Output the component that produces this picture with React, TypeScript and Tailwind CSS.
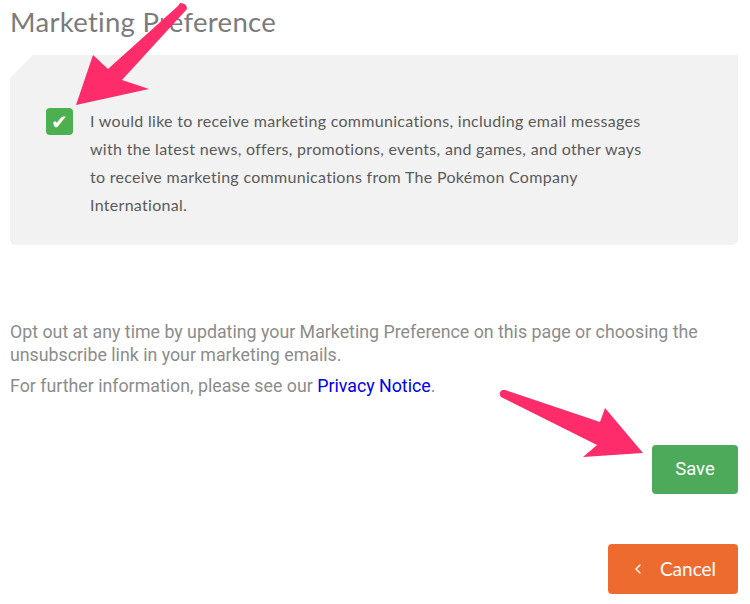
import { ChevronLeft } from "lucide-react"

function Arrows() {
  return (
    <svg
      className="pointer-events-none absolute inset-0"
      width={750}
      height={604}
      viewBox="0 0 750 604"
    >
      {/* arrow pointing at the checkbox */}
      <path
        d="M180 3 Q187 3 187 9 L122 80 L149 89 L76 105 L93 55 L108 69 L178 6 Z"
        fill="#fe2c6b"
      />
      {/* arrow pointing at save */}
      <path
        d="M502 390 Q498 393 501 397 L597 445 L583 457 L643 453 L605 408 L600 422 L505 390 Z"
        fill="#fe2c6b"
      />
    </svg>
  )
}

export default function App() {
  return (
    <div className="relative w-[750px] h-[604px] overflow-hidden bg-white pl-[10px] pr-[12px]">
      <h1 className="text-[27.5px] leading-[44px] text-[#7b7b7b] font-['Lato',sans-serif] tracking-[0.3px]">
        Marketing Preference
      </h1>

      <div className="mt-[11px] h-[190px] bg-[#f2f2f2] rounded-b-md [clip-path:polygon(23px_0,100%_0,100%_100%,0_100%,0_23px)] pl-[36px] pt-[53px] flex gap-[17px]">
        <div className="w-[27px] h-[27px] shrink-0 rounded-[4px] bg-[#4caf50] flex items-center justify-center text-white text-[20px] leading-none font-['DejaVu_Sans',sans-serif]">
          ✔
        </div>
        <p className="w-[558px] -mt-[1px] text-[16px] leading-[28px] text-[#5a5a5a] font-['Lato',sans-serif] tracking-[0.3px]">
          I would like to receive marketing communications, including email messages with the latest news, offers, promotions, events, and games, and other ways to receive marketing communications from The Pokémon Company International.
        </p>
      </div>

      <div className="mt-[75px] font-['Roboto',sans-serif] text-[17.8px] leading-[23px] text-[#8c8c8c]">
        <p>
          Opt out at any time by updating your Marketing Preference on this page or choosing the unsubscribe link in your marketing emails.
        </p>
        <p className="mt-[8px]">
          For further information, please see our{" "}
          <a href="#" className="text-[#0000ee]">
            Privacy Notice
          </a>
          .
        </p>
      </div>

      <div className="mt-[48px] flex flex-col items-end gap-[50px]">
        <button className="w-[86px] h-[49px] rounded-[4px] bg-[#4caa5a] text-white text-[18.5px] font-['Roboto',sans-serif]">
          Save
        </button>
        <button className="w-[130px] h-[50px] rounded-[4px] bg-[#ee6b2f] text-white text-[19px] font-['Lato',sans-serif] flex items-center justify-center gap-[14px]">
          <ChevronLeft className="w-[16px] h-[16px]" strokeWidth={2} />
          <span>Cancel</span>
        </button>
      </div>

      <Arrows />
    </div>
  )
}
